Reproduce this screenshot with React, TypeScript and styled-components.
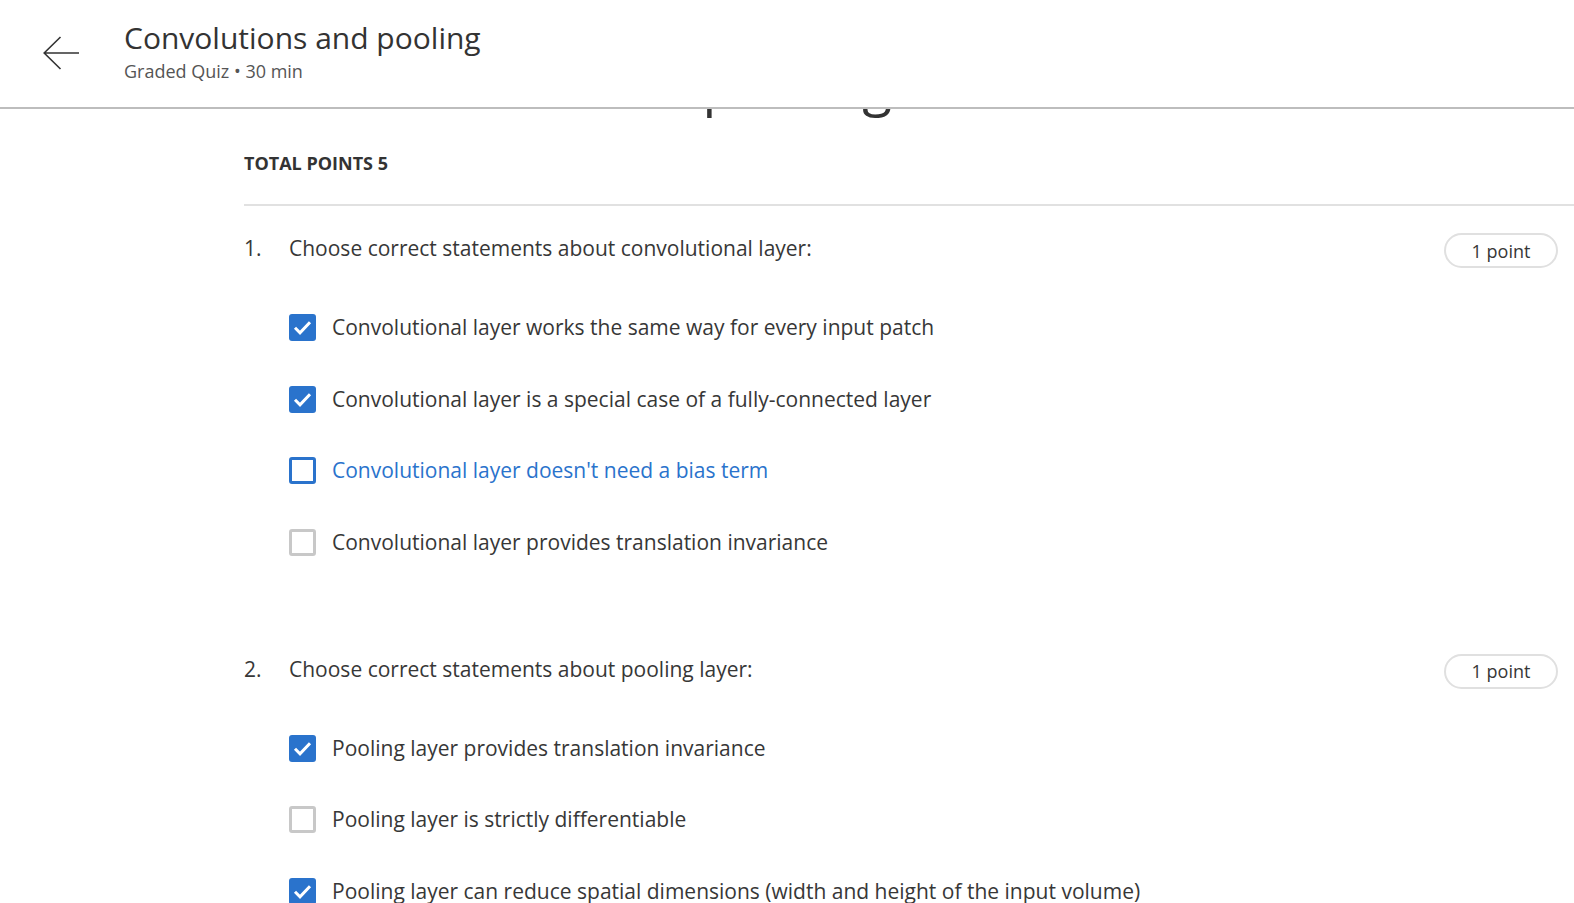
import React from "react";
import styled, { createGlobalStyle } from "styled-components";

const GlobalStyle = createGlobalStyle`
  html, body {
    margin: 0;
    padding: 0;
    background: #fff;
  }
  body {
    font-family: "Open Sans", "Noto Sans", sans-serif;
    color: #373737;
    overflow: hidden;
  }
`;

type OptionState = "checked" | "focused" | "empty";

const quiz: {
  title: string;
  options: { text: string; state: OptionState }[];
}[] = [
  {
    title: "Choose correct statements about convolutional layer:",
    options: [
      { text: "Convolutional layer works the same way for every input patch", state: "checked" },
      { text: "Convolutional layer is a special case of a fully-connected layer", state: "checked" },
      { text: "Convolutional layer doesn't need a bias term", state: "focused" },
      { text: "Convolutional layer provides translation invariance", state: "empty" },
    ],
  },
  {
    title: "Choose correct statements about pooling layer:",
    options: [
      { text: "Pooling layer provides translation invariance", state: "checked" },
      { text: "Pooling layer is strictly differentiable", state: "empty" },
      {
        text: "Pooling layer can reduce spatial dimensions (width and height of the input volume)",
        state: "checked",
      },
    ],
  },
];

export default function App() {
  return (
    <>
      <GlobalStyle />
      <Header>
        <BackButton aria-label="Back">
          <svg width="36" height="34" viewBox="0 0 36 34" fill="none">
            <path d="M17.5 1 L1.2 17 L17.5 33 M1.2 17 H36" stroke="#333" strokeWidth="1.6" />
          </svg>
        </BackButton>
        <TitleBlock>
          <Title>Convolutions and pooling</Title>
          <Subtitle>Graded Quiz • 30 min</Subtitle>
        </TitleBlock>
      </Header>
      <Main>
        <PageHeading>Convolutions and pooling</PageHeading>
        <TotalPoints>TOTAL POINTS 5</TotalPoints>
        <QuestionList>
          {quiz.map((q, i) => (
            <Question key={i}>
              <QuestionRow>
                <Number>{i + 1}.</Number>
                <QuestionText>{q.title}</QuestionText>
                <PointPill>1 point</PointPill>
              </QuestionRow>
              <Options>
                {q.options.map((o, j) => (
                  <OptionRow key={j}>
                    <Box $state={o.state}>
                      {o.state === "checked" && (
                        <svg width="27" height="27" viewBox="0 0 27 27" fill="none">
                          <path d="M6 13.8 L11 18.8 L21 8.2" stroke="#fff" strokeWidth="3" />
                        </svg>
                      )}
                    </Box>
                    <OptionText $focused={o.state === "focused"}>{o.text}</OptionText>
                  </OptionRow>
                ))}
              </Options>
            </Question>
          ))}
        </QuestionList>
      </Main>
    </>
  );
}

const Header = styled.header`
  position: sticky;
  top: 0;
  z-index: 2;
  display: flex;
  align-items: flex-start;
  height: 107px;
  padding-left: 43px;
  background: #fff;
  border-bottom: 2px solid #bdbdbd;
`;

const BackButton = styled.button`
  display: flex;
  margin-top: 36px;
  padding: 0;
  width: 36px;
  height: 34px;
  border: none;
  background: none;
  cursor: pointer;
`;

const TitleBlock = styled.div`
  display: flex;
  flex-direction: column;
  gap: 4px;
  margin-left: 45px;
  padding-top: 21px;
`;

const Title = styled.h1`
  margin: 0;
  font-size: 30px;
  line-height: 34px;
  font-weight: 400;
  color: #333;
`;

const Subtitle = styled.div`
  font-size: 18px;
  line-height: 24px;
  color: #555;
`;

const Main = styled.main`
  padding-left: 244px;
`;

const PageHeading = styled.h2`
  margin: -57px 0 0;
  font-size: 54.5px;
  line-height: 64px;
  font-weight: 400;
  color: #333;
  white-space: nowrap;
`;

const TotalPoints = styled.div`
  margin-top: 36px;
  padding-bottom: 30px;
  border-bottom: 2px solid #e1e1e1;
  font-size: 18px;
  line-height: 22px;
  font-weight: 700;
  color: #333;
`;

const QuestionList = styled.div`
  display: flex;
  flex-direction: column;
  gap: 98px;
  margin-top: 27px;
`;

const Question = styled.section`
  display: flex;
  flex-direction: column;
  gap: 46px;
`;

const QuestionRow = styled.div`
  display: flex;
  align-items: flex-start;
  padding-right: 16px;
`;

const Number = styled.span`
  width: 45px;
  flex-shrink: 0;
  font-size: 21px;
  line-height: 30px;
`;

const QuestionText = styled.span`
  font-size: 21px;
  line-height: 30px;
`;

const PointPill = styled.span`
  display: flex;
  align-items: center;
  justify-content: center;
  box-sizing: border-box;
  margin-left: auto;
  width: 114px;
  height: 35px;
  border: 2px solid #e0e0e0;
  border-radius: 18px;
  font-size: 18px;
  color: #373737;
`;

const Options = styled.div`
  display: flex;
  flex-direction: column;
  gap: 44.5px;
  padding-left: 45px;
`;

const OptionRow = styled.label`
  display: flex;
  align-items: center;
  gap: 16px;
  height: 27px;
  cursor: pointer;
`;

const Box = styled.span<{ $state: OptionState }>`
  display: flex;
  flex-shrink: 0;
  box-sizing: border-box;
  width: 27px;
  height: 27px;
  border-radius: 3px;
  background: ${({ $state }) => ($state === "checked" ? "#2a73cc" : "#fff")};
  border: ${({ $state }) =>
    $state === "checked"
      ? "none"
      : $state === "focused"
      ? "3px solid #2a73cc"
      : "3px solid #c8c8c8"};
`;

const OptionText = styled.span<{ $focused: boolean }>`
  font-size: 21px;
  line-height: 27px;
  color: ${({ $focused }) => ($focused ? "#2a73cc" : "#373737")};
  white-space: nowrap;
`;
